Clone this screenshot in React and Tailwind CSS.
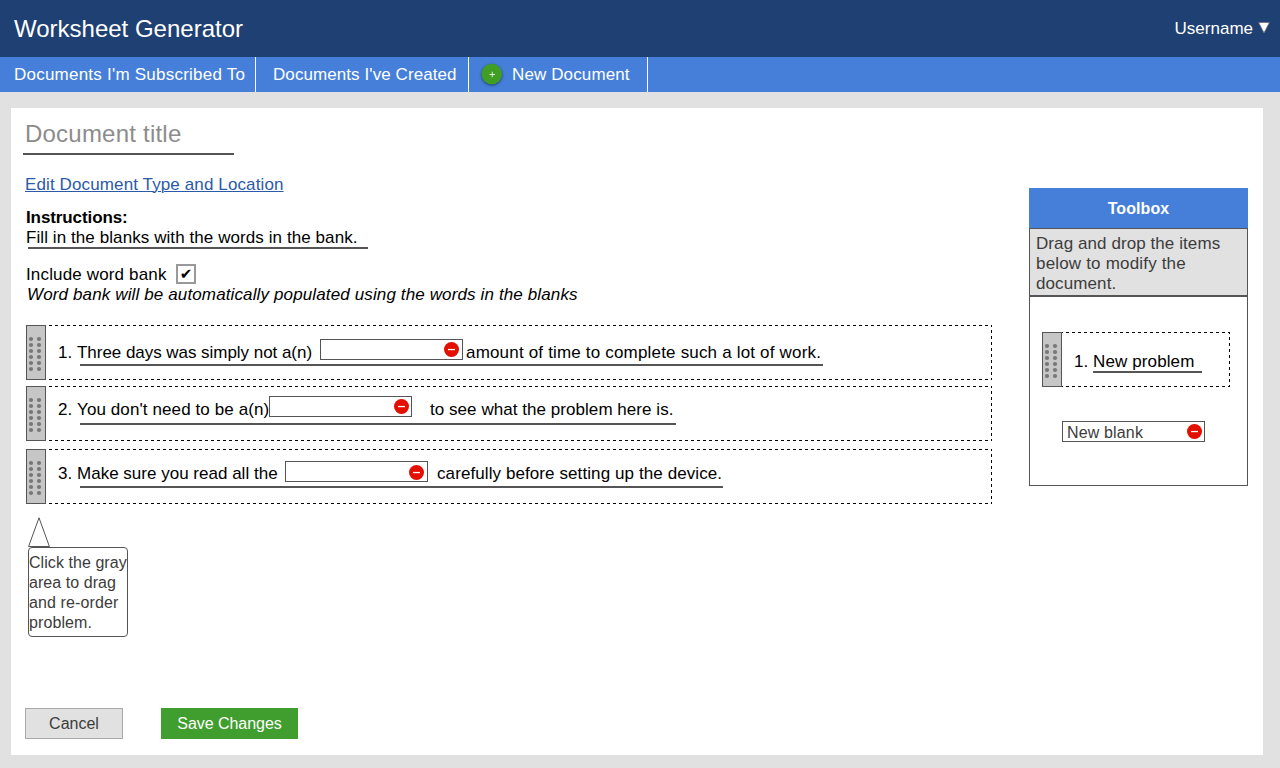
const dots = [14, 20, 26, 32, 38, 44];

function DragHandle() {
  return (
    <div className="h-[55px] w-5 shrink-0 border border-[#555] bg-[#c6c6c6]">
      <svg width="18" height="53" viewBox="1 1 18 53" fill="#777">
        {dots.map((y) => (
          <g key={y}>
            <circle cx="5" cy={y} r="2.1" />
            <circle cx="13" cy={y} r="2.1" />
          </g>
        ))}
      </svg>
    </div>
  );
}

function Blank({ className = "", iconClass = "mr-[3px] mt-[2px]", label }) {
  return (
    <div className={`flex h-[21px] w-[143px] shrink-0 items-start justify-between border border-[#555] bg-white ${className}`}>
      <span className="pl-1 pt-px text-base leading-5 tracking-[0.15px] text-[#3c3c3c]">{label}</span>
      <svg className={iconClass} width="15" height="15" viewBox="0 0 15 15">
        <circle cx="7.5" cy="7.5" r="7.5" fill="#e30f00" />
        <rect x="4" y="6.9" width="7" height="1.3" fill="#fff" />
      </svg>
    </div>
  );
}

const mainDash =
  "bg-[repeating-linear-gradient(90deg,transparent_0_3px,#000_3px_6px)]";
const toolDash =
  "bg-[repeating-linear-gradient(90deg,#000_0_1px,transparent_1px_4px,#000_4px_6px)]";

function DashedRow({ children, className, dash }) {
  return (
    <div className={`flex h-[55px] ${className}`}>
      <DragHandle />
      <div className="flex min-w-0 grow">
        <div className="flex min-w-0 grow flex-col justify-between">
          <div className={`-mr-px h-px ${dash}`} />
          <div className="h-[53px]">{children}</div>
          <div className={`-mr-px h-px ${dash}`} />
        </div>
        <div className="w-px bg-[repeating-linear-gradient(180deg,#000_0_2px,transparent_2px_5px,#000_5px_6px)]" />
      </div>
    </div>
  );
}

const problems = [
  {
    n: 1, before: "Three days was simply not a(n)", after: "amount of time to complete such a lot of work.",
    row: "", line: "h-[38px]", text: "mt-[17px]", first: "w-[243px] tracking-[-0.04px]", blank: "mt-[13px]",
    icon: "mr-[3px] mt-[2px]", rest: "ml-[3px] tracking-[0.18px]", rule: "w-[743px]",
  },
  {
    n: 2, before: "You don't need to be a(n)", after: "to see what the problem here is.",
    row: "mt-[6px]", line: "h-[36px]", text: "mt-[13px]", first: "w-[192px] tracking-[0.1px]", blank: "mt-[9px]",
    icon: "mr-[2px] mt-[2px]", rest: "ml-[18px] tracking-[0.05px]", rule: "w-[596px]",
  },
  {
    n: 3, before: "Make sure you read all the", after: "carefully before setting up the device.",
    row: "mt-[8px]", line: "h-[36px]", text: "mt-[14px]", first: "w-[208px] tracking-[0.01px]", blank: "mt-[11px]",
    icon: "mr-[3px] mt-[3px]", rest: "ml-[9px] tracking-[0.09px]", rule: "w-[643px]",
  },
];

function Problem({ p }) {
  return (
    <DashedRow className={`w-[966px] ${p.row}`} dash={mainDash}>
      <div className={`flex items-start pl-3 ${p.line}`}>
        <span className={`w-[19px] ${p.text}`}>{p.n}.</span>
        <span className={`${p.text} ${p.first}`}>{p.before}</span>
        <Blank className={p.blank} iconClass={p.icon} />
        <span className={`${p.text} ${p.rest}`}>{p.after}</span>
      </div>
      <div className={`ml-[34px] h-[2px] bg-[#555] ${p.rule}`} />
    </DashedRow>
  );
}

function Header() {
  return (
    <header className="flex h-[57px] items-start justify-between bg-[#1f4072] pl-[14px] pr-[10px] text-white">
      <h1 className="mt-[15px] text-2xl leading-7">Worksheet Generator</h1>
      <div className="mt-[19px] flex items-start gap-[5px]">
        <span>Username</span>
        <svg className="mt-[3px]" width="12" height="12" viewBox="0 0 12 12">
          <path d="M.6 .5H11.4L6 11Z" fill="#fff" stroke="#6b6b6b" strokeWidth=".8" />
        </svg>
      </div>
    </header>
  );
}

function Nav() {
  return (
    <nav className="flex h-[35px] bg-[#467fd9] text-white">
      <a className="w-64 border-r border-white pl-[14px] pt-[8px] tracking-[0.23px]">Documents I'm Subscribed To</a>
      <a className="w-[213px] border-r border-white pl-[17px] pt-[8px] tracking-[0.08px]">Documents I've Created</a>
      <a className="flex w-[179px] items-start border-r border-white pl-[12px] pt-[8px]">
        <svg className="-mt-px overflow-visible drop-shadow-[0_1px_1.5px_rgba(0,0,0,0.5)]" width="21" height="21" viewBox="0 0 21 21">
          <circle cx="10.8" cy="10" r="10.3" fill="#3f9e23" />
          <path d="M8.5 10.5H14M11.25 7.7V13.2" stroke="#fff" strokeWidth=".8" />
        </svg>
        <span className="ml-[10px] tracking-[0.12px]">New Document</span>
      </a>
    </nav>
  );
}

function Editor() {
  return (
    <section className="flex w-[1018px] flex-col items-start pl-[15px] text-black">
      <div className="-ml-[3px] mt-[12px] h-[35px] w-[211px] border-b-2 border-[#555] pl-[2px] text-2xl leading-7 tracking-[0.22px] text-[#8c8c8c]">
        Document title
      </div>
      <a className="-ml-px mt-[20px] tracking-[0.12px] text-[#2c5aa6] underline decoration-1 underline-offset-[1px]">Edit Document Type and Location</a>
      <h2 className="mt-[13px] font-bold tracking-[-0.1px]">Instructions:</h2>
      <p className="tracking-[0.08px]">Fill in the blanks with the words in the bank.</p>
      <div className="-mt-px ml-[2px] h-[2px] w-[340px] bg-[#555]" />
      <div className="mt-[15px] flex h-5 items-start">
        <span className="mt-px w-[150px] tracking-[0.15px]">Include word bank</span>
        <span className="flex h-5 w-5 items-center justify-center border-2 border-[#999] font-['DejaVu_Sans',sans-serif] text-[15px] leading-4">✔</span>
      </div>
      <p className="ml-px mt-px tracking-[0.13px] italic">Word bank will be automatically populated using the words in the blanks</p>
      <div className="mt-[20px]">
        {problems.map((p) => <Problem key={p.n} p={p} />)}
      </div>
      <div className="ml-[2px] mt-[13px] flex flex-col text-base leading-5 text-[#3c3c3c]">
        <svg width="22" height="30" viewBox="0 0 22 30">
          <path d="M11 .8L21.4 29.5H.6Z" fill="#fff" stroke="#555" strokeWidth="1" />
        </svg>
        <div className="h-[90px] w-[100px] rounded-[4px] border border-[#555] pt-[5px]">
          <div className="tracking-[0.06px]">Click the gray</div>
          <div className="tracking-[0.06px]">area to drag</div>
          <div className="tracking-[0.12px]">and re-order</div>
          <div className="tracking-[0.1px]">problem.</div>
        </div>
      </div>
      <div className="-ml-px mt-[71px] flex gap-[38px] text-base leading-[29px]">
        <button className="h-[31px] w-[98px] border border-[#a9a9a9] bg-[#e1e1e1] text-[#3c3c3c]">Cancel</button>
        <button className="h-[31px] w-[137px] bg-[#3f9e2e] tracking-[-0.05px] text-white">Save Changes</button>
      </div>
    </section>
  );
}

function Toolbox() {
  return (
    <aside className="mt-20 w-[219px]">
      <div className="h-10 bg-[#467fd9] pt-[11px] text-center text-base leading-5 font-bold tracking-[0.1px] text-white">Toolbox</div>
      <div className="h-[68px] border border-[#555] bg-[#e1e1e1] pl-[6px] pt-[5px] text-[#3c3c3c]">
        <div className="tracking-[0.08px]">Drag and drop the items</div>
        <div className="tracking-[0.18px]">below to modify the</div>
        <div className="tracking-[0.1px]">document.</div>
      </div>
      <div className="h-[190px] border border-[#555] pl-[12px] pt-[35px] text-black">
        <DashedRow className="w-[188px]" dash={toolDash}>
          <div className="flex h-[38px] pl-3 pt-[19px]">
            <span className="w-[19px]">1.</span>
            <span className="tracking-[0.12px]">New problem</span>
          </div>
          <div className="ml-[31px] h-[2px] w-[109px] bg-[#555]" />
        </DashedRow>
        <Blank className="ml-5 mt-[34px]" iconClass="mr-[2px] mt-[2px]" label="New blank" />
      </div>
    </aside>
  );
}

export default function App() {
  return (
    <div className="h-[768px] w-[1280px] overflow-hidden bg-[#e1e1e1] font-['Liberation_Sans',Arial,sans-serif] text-[17px] leading-5 whitespace-nowrap">
      <Header />
      <Nav />
      <main className="ml-[11px] mt-4 flex h-[647px] w-[1252px] items-start bg-white">
        <Editor />
        <Toolbox />
      </main>
    </div>
  );
}
